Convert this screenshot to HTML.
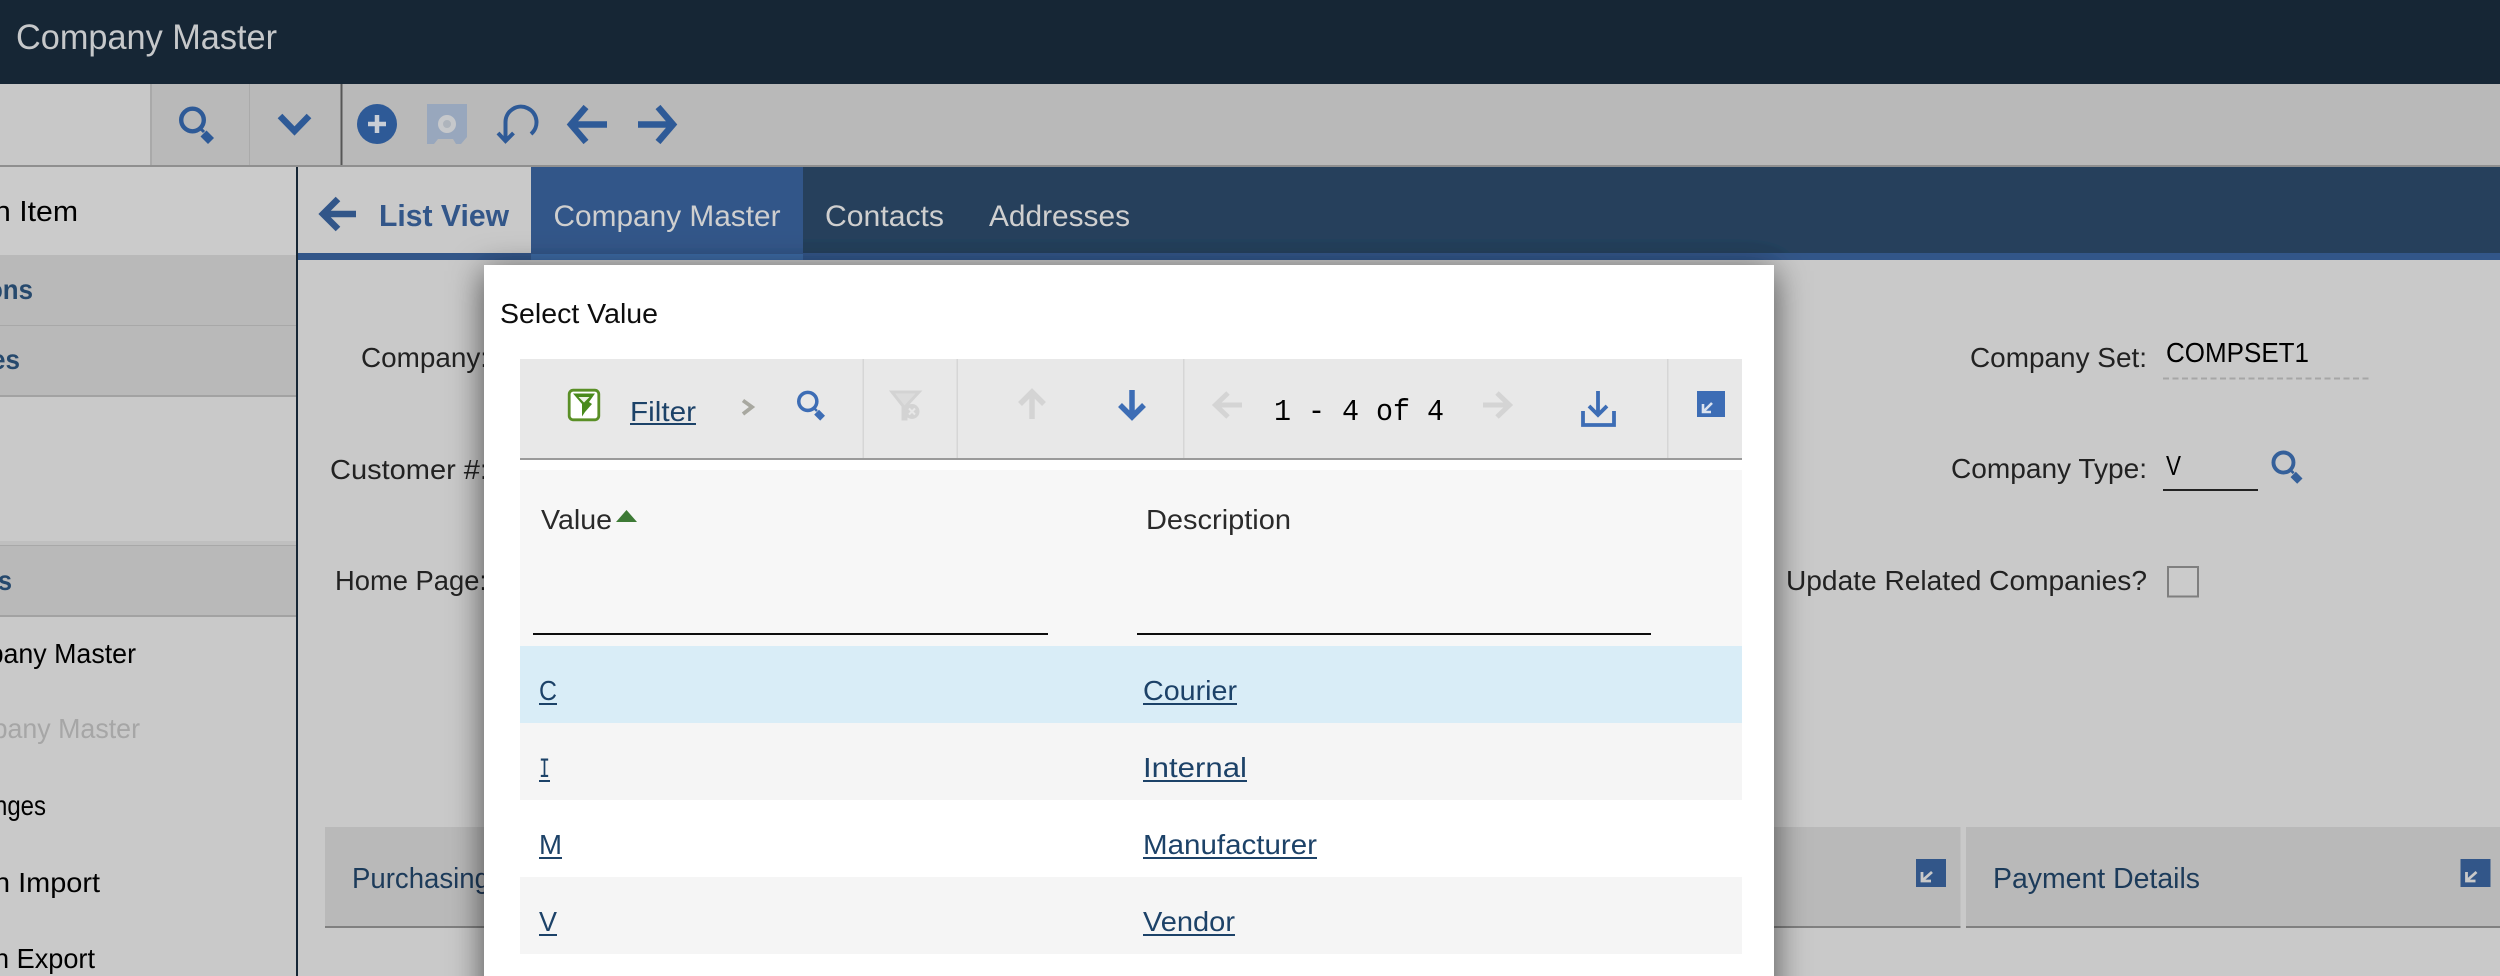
<!DOCTYPE html>
<html lang="en">
<head>
<meta charset="utf-8">
<title>Company Master</title>
<style>
html,body{margin:0;padding:0;width:2500px;height:976px;overflow:hidden;background:#c9c9c9}
svg{display:block;position:absolute;left:0;top:0}
text{font-family:"Liberation Sans",sans-serif;font-size:28px}
</style>
</head>
<body>
<svg xmlns="http://www.w3.org/2000/svg" width="2500" height="976" viewBox="0 0 2500 976">
<defs>
<filter id="b" filterUnits="userSpaceOnUse" x="-30" y="-30" width="2560" height="1036"><feGaussianBlur stdDeviation="0.38"/></filter>
<filter id="sh" filterUnits="userSpaceOnUse" primitiveUnits="userSpaceOnUse" x="350" y="150" width="1560" height="950">
<feFlood x="484" y="271" width="1290" height="800" flood-color="#000" flood-opacity="0.62" result="f"/>
<feGaussianBlur in="f" stdDeviation="17" x="350" y="150" width="1560" height="950"/>
</filter>
<symbol id="mag" viewBox="0 0 35 35" overflow="visible">
<circle cx="13.500" cy="13" r="11.300" fill="none" stroke="currentColor" stroke-width="4.400"/>
<path d="M22 22L25 25" stroke="currentColor" stroke-width="3" fill="none"/>
<path d="M24.500 26.500L32 34" stroke="currentColor" stroke-width="8.500" fill="none"/>
</symbol>
</defs>
<rect x="484" y="900" width="1290" height="76" fill="#fff"/>
<g filter="url(#b)">
<rect x="-30" y="-30" width="2560" height="1006" fill="#c9c9c9"/>
<!-- header -->
<rect x="-30" y="-30" width="2560" height="114" fill="#182635"/>
<text x="16" y="49" style="font-size:35px" fill="#c6c8ca" textLength="261" lengthAdjust="spacingAndGlyphs">Company Master</text>

<!-- top toolbar -->
<rect x="-30" y="84" width="180" height="81" fill="#c8c8c8"/>
<rect x="150" y="84" width="2380" height="81" fill="#b9b9b9"/>
<rect x="150" y="84" width="2" height="81" fill="#a9a9a9"/>
<rect x="249" y="84" width="1" height="81" fill="#aaaaaa"/>
<rect x="340.500" y="84" width="2" height="81" fill="#565656"/>
<rect x="-30" y="165" width="2560" height="2" fill="#8f8f8f"/>
<use href="#mag" x="179" y="107" width="35" height="35" color="#2f5a97"/>
<path d="M280 116L294.500 131L309 116" fill="none" stroke="#2f5a97" stroke-width="6.500"/>
<circle cx="377" cy="124" r="20" fill="#2f5a97"/>
<path d="M368 124H386M377 115V133" stroke="#c9ced6" stroke-width="4.500" fill="none"/>
<path d="M427 104H467V137L461 144H456L453 139H438L434 144H427Z" fill="#98a7bd"/>
<circle cx="447" cy="124" r="6.500" fill="#aeb4bc" stroke="#c6c8cb" stroke-width="5"/>
<path d="M531 134A15.500 15.500 0 1 0 505.500 122V141M498 133L505.500 141L513.500 133" fill="none" stroke="#2f5a97" stroke-width="4"/>
<path d="M586 107L571 124.500L586 142M573 124.500H607" fill="none" stroke="#2f5a97" stroke-width="6.500"/>
<path d="M658 107L673 124.500L658 142M671 124.500H638" fill="none" stroke="#2f5a97" stroke-width="6.500"/>

<!-- sidebar -->
<rect x="-30" y="167" width="326" height="88" fill="#cbcbcb"/>
<text x="-6" y="221" style="font-size:29px" fill="#000" textLength="84" lengthAdjust="spacingAndGlyphs">n Item</text>
<rect x="-30" y="255" width="326" height="142" fill="#b9b9b9"/>
<rect x="-30" y="325" width="326" height="1" fill="#a8a8a8"/>
<rect x="-30" y="395" width="326" height="2" fill="#a2a2a2"/>
<text x="-13" y="299" font-weight="bold" fill="#27496d" textLength="46" lengthAdjust="spacingAndGlyphs">ons</text>
<text x="-9" y="369" font-weight="bold" fill="#27496d" textLength="29" lengthAdjust="spacingAndGlyphs">es</text>
<rect x="-30" y="541" width="326" height="76" fill="#b9b9b9"/>
<rect x="-30" y="541" width="326" height="4" fill="#bfbfbf"/>
<rect x="-30" y="545" width="326" height="1" fill="#a8a8a8"/>
<rect x="-30" y="615" width="326" height="2" fill="#a2a2a2"/>
<text x="-2" y="590" font-weight="bold" fill="#27496d" textLength="14" lengthAdjust="spacingAndGlyphs">s</text>
<text x="-68" y="663" fill="#000" textLength="204" lengthAdjust="spacingAndGlyphs">Company Master</text>
<text x="-64" y="738" fill="#a6a6a6" textLength="204" lengthAdjust="spacingAndGlyphs">Company Master</text>
<text x="-6" y="815" fill="#000" textLength="52" lengthAdjust="spacingAndGlyphs">nges</text>
<text x="-6" y="892" fill="#000" textLength="106" lengthAdjust="spacingAndGlyphs">n Import</text>
<text x="-6" y="968" fill="#000" textLength="101" lengthAdjust="spacingAndGlyphs">n Export</text>
<rect x="296" y="167" width="2" height="809" fill="#182635"/>

<!-- tab bar -->
<rect x="298" y="167" width="233" height="86" fill="#c9c9c9"/>
<rect x="803" y="167" width="1727" height="86" fill="#25405c"/>
<rect x="531" y="167" width="272" height="87" fill="#325689"/>
<rect x="298" y="253" width="2232" height="7" fill="#325689"/>
<rect x="531" y="254" width="272" height="6" fill="#3c69a4"/>
<path d="M338 199L323 214L338 229M325 214H356" fill="none" stroke="#325689" stroke-width="6.500"/>
<text x="379" y="226" font-weight="bold" style="font-size:31px" fill="#325689" textLength="130" lengthAdjust="spacingAndGlyphs">List View</text>
<text x="553.500" y="226" style="font-size:30px" fill="#cfcfcf" textLength="227" lengthAdjust="spacingAndGlyphs">Company Master</text>
<text x="825" y="226" style="font-size:30px" fill="#cfcfcf" textLength="119" lengthAdjust="spacingAndGlyphs">Contacts</text>
<text x="989" y="226" style="font-size:30px" fill="#cfcfcf" textLength="141" lengthAdjust="spacingAndGlyphs">Addresses</text>

<!-- form labels -->
<text x="361" y="367" fill="#222" textLength="127" lengthAdjust="spacingAndGlyphs">Company:</text>
<text x="330" y="479" fill="#222" textLength="158" lengthAdjust="spacingAndGlyphs">Customer #:</text>
<text x="335" y="590" fill="#222" textLength="152" lengthAdjust="spacingAndGlyphs">Home Page:</text>
<text x="1970" y="367" fill="#222" textLength="177" lengthAdjust="spacingAndGlyphs">Company Set:</text>
<text x="2166" y="362" fill="#000" textLength="143" lengthAdjust="spacingAndGlyphs">COMPSET1</text>
<path d="M2163 378.500H2371" stroke="#a6a6a6" stroke-width="2" stroke-dasharray="6 3.500"/>
<text x="1951" y="478" fill="#222" textLength="196" lengthAdjust="spacingAndGlyphs">Company Type:</text>
<text x="2166" y="475" fill="#000" textLength="15" lengthAdjust="spacingAndGlyphs">V</text>
<rect x="2163" y="489" width="95" height="2" fill="#222"/>
<use href="#mag" x="2271" y="451" width="32" height="31" color="#35609a"/>
<text x="1786" y="590" fill="#222" textLength="361" lengthAdjust="spacingAndGlyphs">Update Related Companies?</text>
<rect x="2168" y="567" width="30" height="29.500" fill="#cbcbcb" stroke="#7f7f7f" stroke-width="2"/>

<!-- section panels -->
<rect x="325" y="827" width="1635.500" height="99" fill="#b9b9b9"/>
<rect x="325" y="926" width="1635.500" height="2" fill="#808080"/>
<rect x="1966" y="827" width="564" height="99" fill="#b9b9b9"/>
<rect x="1966" y="926" width="564" height="2" fill="#808080"/>
<text x="352" y="888" style="font-size:29px" fill="#1d3a5a" textLength="138" lengthAdjust="spacingAndGlyphs">Purchasing</text>
<text x="1993" y="888" style="font-size:29px" fill="#1d3a5a" textLength="207" lengthAdjust="spacingAndGlyphs">Payment Details</text>
<rect x="1916" y="859" width="30" height="28" fill="#325689"/>
<path d="M1932 872L1923 880M1922 872V881H1931" fill="none" stroke="#c9c9c9" stroke-width="2.800"/>
<rect x="2460.500" y="859" width="30" height="28" fill="#325689"/>
<path d="M2476.500 872L2467.500 880M2466.500 872V881H2475.500" fill="none" stroke="#c9c9c9" stroke-width="2.800"/>

<!-- modal shadow -->
<rect x="484" y="271" width="4" height="4" fill="#000" filter="url(#sh)"/>
<!-- modal -->
<rect x="484" y="265" width="1290" height="711" fill="#fff"/>
<text x="500" y="323" fill="#111" textLength="158" lengthAdjust="spacingAndGlyphs">Select Value</text>

<!-- modal toolbar -->
<rect x="520" y="359" width="1222" height="99" fill="#e8e8e8"/>
<rect x="520" y="458" width="1222" height="2" fill="#9a9a9a"/>
<rect x="862.500" y="359" width="1.500" height="99" fill="#d6d6d6"/>
<rect x="956.500" y="359" width="1.500" height="99" fill="#d6d6d6"/>
<rect x="1183" y="359" width="1.500" height="99" fill="#d6d6d6"/>
<rect x="1667" y="359" width="1.500" height="99" fill="#d6d6d6"/>
<rect x="569.200" y="390.200" width="29.600" height="29.600" rx="4" fill="#fff" stroke="#5a8f28" stroke-width="2.800"/>
<path d="M573 393.500H595L589 402L592 404L585 412L582 416.500V404Z" fill="#4a8a1f"/>
<path d="M578.500 397H589.500L584 402.500Z" fill="#eef3e6"/>
<text x="630" y="421" fill="#1f4268" textLength="66" lengthAdjust="spacingAndGlyphs">Filter</text>
<rect x="630" y="423" width="66" height="2" fill="#1f4268"/>
<path d="M743 400.500L752 407L743 414" fill="none" stroke="#a8a8a0" stroke-width="3.800"/>
<use href="#mag" x="796" y="391" width="30" height="28" color="#3d6db5"/>
<path d="M892 392H919L906 406V419H903V406Z" fill="#dcdcdc" stroke="#d3d3d3" stroke-width="3"/>
<circle cx="912" cy="411.500" r="7.500" fill="#d3d3d3"/>
<path d="M909 408.500L915 414.500M915 408.500L909 414.500" stroke="#e8e8e8" stroke-width="2"/>
<path d="M1020 404L1032 392L1044 404M1032 394V419" fill="none" stroke="#d4d4d4" stroke-width="5.500"/>
<path d="M1120 405L1132 417L1144 405M1132 390V415" fill="none" stroke="#3d6db5" stroke-width="5.500"/>
<path d="M1228 393L1215.500 405L1228 417M1218 405H1242" fill="none" stroke="#d4d4d4" stroke-width="5"/>
<path d="M1497 393L1509.500 405L1497 417M1507 405H1483" fill="none" stroke="#d4d4d4" stroke-width="5"/>
<text x="1274" y="420" style="font-family:'Liberation Mono',monospace;font-size:31px" fill="#000" textLength="170" lengthAdjust="spacingAndGlyphs">1 - 4 of 4</text>
<path d="M1598 391V415M1589 406L1598 415L1607 406" fill="none" stroke="#3d6db5" stroke-width="3.800"/>
<path d="M1583 411V425H1614V411" fill="none" stroke="#3d6db5" stroke-width="3.800"/>
<rect x="1697" y="391" width="28" height="26" fill="#3d6db5"/>
<path d="M1712 403L1704 411M1703 404V412H1711" fill="none" stroke="#dbe3ef" stroke-width="2.600"/>

<!-- table header -->
<rect x="520" y="470" width="1222" height="176" fill="#f7f7f7"/>
<text x="541" y="529" fill="#2a2a2a" textLength="71" lengthAdjust="spacingAndGlyphs">Value</text>
<path d="M616 522H637L626.500 510Z" fill="#3d7a35"/>
<text x="1146" y="529" fill="#2a2a2a" textLength="145" lengthAdjust="spacingAndGlyphs">Description</text>
<rect x="533" y="633" width="515" height="2" fill="#111"/>
<rect x="1137" y="633" width="514" height="2" fill="#111"/>

<!-- rows -->
<rect x="520" y="646" width="1222" height="77" fill="#d9edf7"/>
<rect x="520" y="723" width="1222" height="77" fill="#f5f5f5"/>
<rect x="520" y="877" width="1222" height="77" fill="#f5f5f5"/>
<g fill="#1f4268">
<text x="539" y="700" fill="#1f4268" textLength="18" lengthAdjust="spacingAndGlyphs">C</text>
<rect x="539" y="703" width="18" height="2"/>
<text x="539" y="777" style="font-family:'Liberation Mono',monospace" fill="#1f4268" textLength="11" lengthAdjust="spacingAndGlyphs">I</text>
<rect x="539" y="780" width="11" height="2"/>
<text x="539" y="854" fill="#1f4268" textLength="23" lengthAdjust="spacingAndGlyphs">M</text>
<rect x="539" y="857" width="23" height="2"/>
<text x="539" y="931" fill="#1f4268" textLength="18" lengthAdjust="spacingAndGlyphs">V</text>
<rect x="539" y="934" width="18" height="2"/>
<text x="1143" y="700" fill="#1f4268" textLength="94" lengthAdjust="spacingAndGlyphs">Courier</text>
<rect x="1143" y="703" width="94" height="2"/>
<text x="1143" y="777" fill="#1f4268" textLength="104" lengthAdjust="spacingAndGlyphs">Internal</text>
<rect x="1143" y="780" width="104" height="2"/>
<text x="1143" y="854" fill="#1f4268" textLength="174" lengthAdjust="spacingAndGlyphs">Manufacturer</text>
<rect x="1143" y="857" width="174" height="2"/>
<text x="1143" y="931" fill="#1f4268" textLength="92" lengthAdjust="spacingAndGlyphs">Vendor</text>
<rect x="1143" y="934" width="92" height="2"/>
</g>
</g>
</svg>
</body>
</html>
